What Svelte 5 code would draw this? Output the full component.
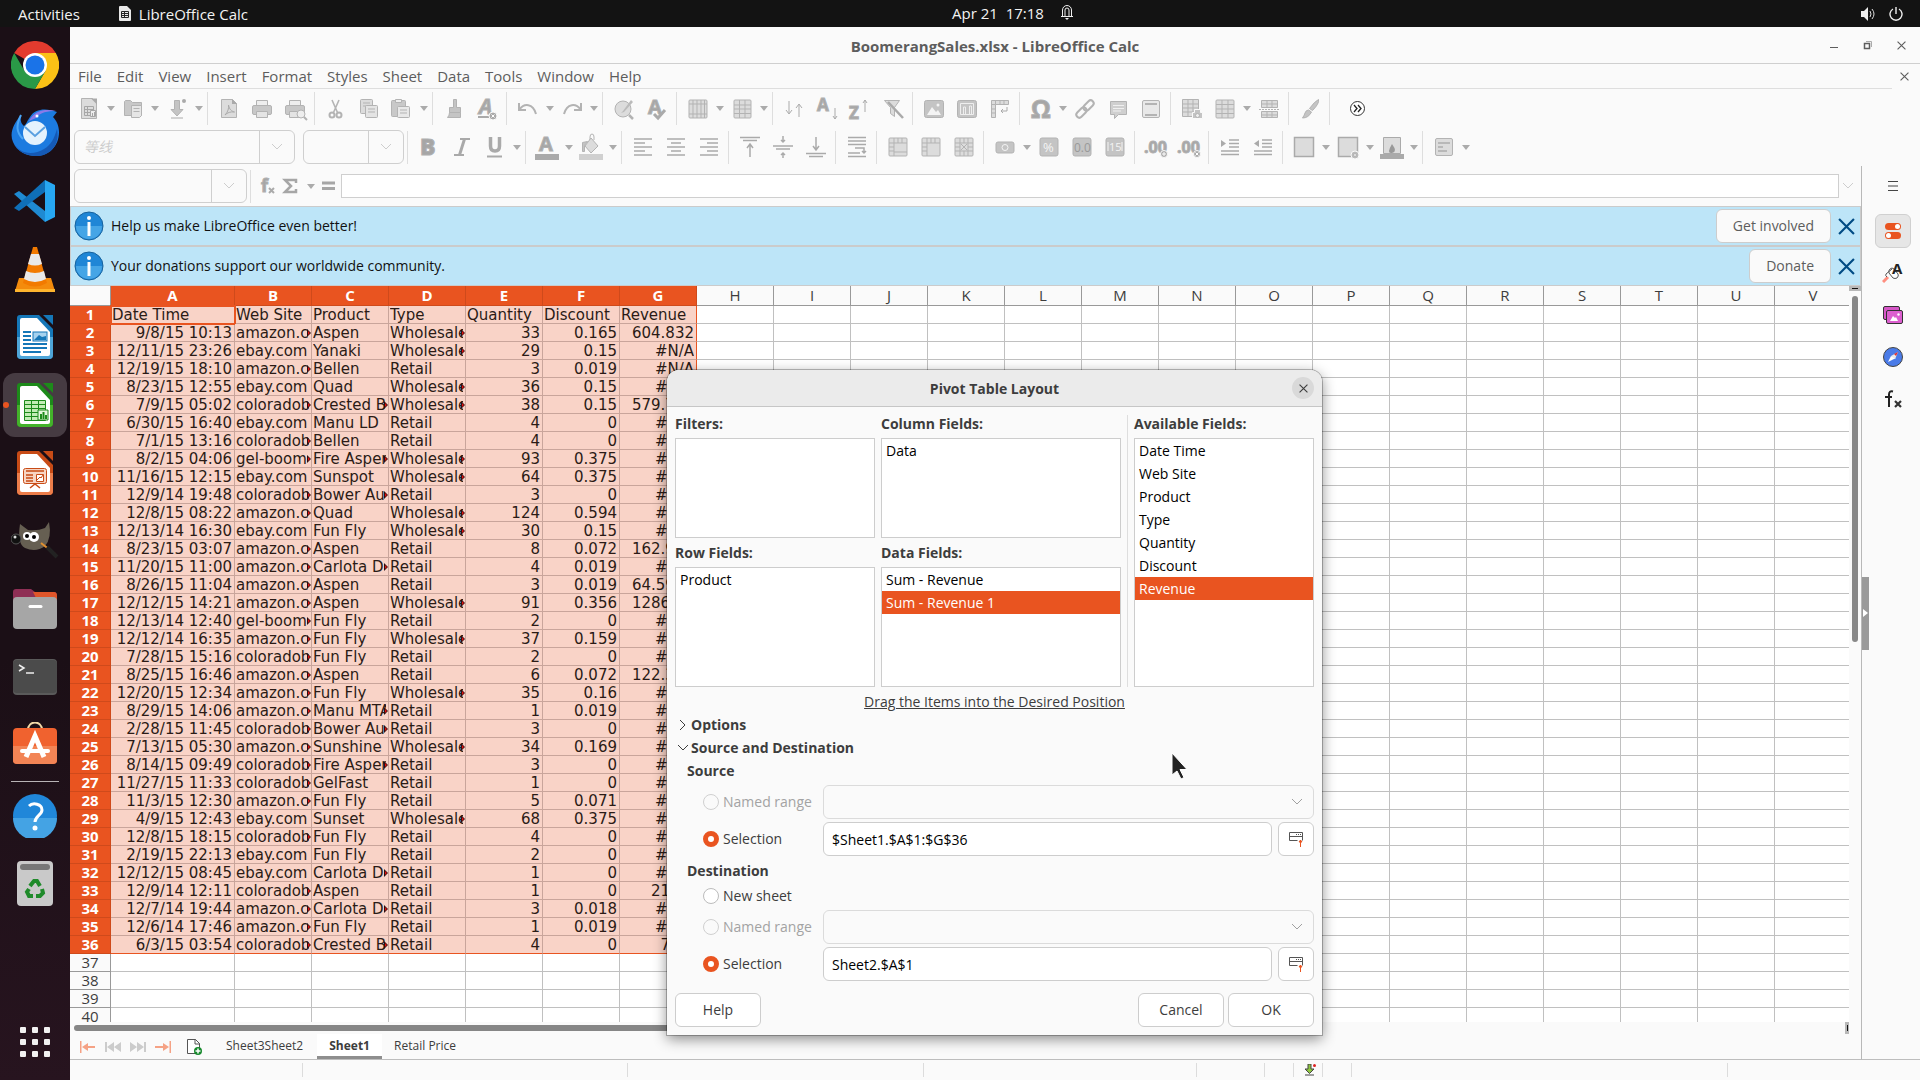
<script>
  const menus = ["File", "Edit", "View", "Insert", "Format", "Styles", "Sheet", "Data", "Tools", "Window", "Help"];

  // toolbar drawings, all on a 24x24 board; grey fill and stroke come from the parent svg
  const sheetGrid = '<rect x="4" y="3" width="17" height="18" rx="1"/><path fill="none" d="M4 8h17M4 12h17M4 16.500h17M9.500 3v18M15 3v18"/>';
  const icons = {
    newdoc: '<path d="M4.500 1.500h11l4 4v16h-15z"/><path fill="#aaa" stroke="none" d="M14 1.500h6v6z"/><path fill="none" stroke="#a6a6a6" d="M7.500 9.500h9v9h-9zM7.500 12.500h9M7.500 15.500h9M10.500 9.500v9"/><path fill="#eee" stroke="#a6a6a6" d="M13.500 13.500h5v6h-5zM15.500 19v-3M17.500 19v-4"/>',
    open: '<path fill="#c8c8c8" d="M3.500 18.500v-14l1-1h5l2 2h9v13z"/><path fill="#e6e6e6" d="M10.500 8.500h10v10l-2 2h-8zM12.500 11.500h6M12.500 14.500h6"/>',
    save: '<path fill="#c4c4c4" d="M9.500 3.500h5v9h3.500l-6 6.500-6-6.500h3.500z"/><circle cx="19" cy="4" r="2" fill="#aaa" stroke="none"/><path stroke="#aaa" d="M6 21h12"/>',
    pdf: '<path d="M4.500 2.500h11l4 4v14h-15z"/><path fill="#aaa" stroke="none" d="M15 2v5h5z"/><path fill="none" stroke="#aaa" d="M8 18c3-3 4-7 3.500-10c1 5 3 6 6 7c-4-.5-7 .5-9.500 3"/>',
    print: '<path fill="#eee" d="M6.500 3.500h11v5h-11z"/><rect x="2.500" y="8.500" width="19" height="9" rx="1.500" fill="#c8c8c8"/><path fill="#e4e4e4" d="M6.500 14.500h11v6h-11z"/>',
    preview: '<path fill="#eee" d="M6.500 3.500h11v5h-11z"/><rect x="2.500" y="8.500" width="19" height="9" rx="1.500" fill="#c8c8c8"/><path fill="#e4e4e4" d="M6.500 14.500h11v6h-11z"/><circle cx="18" cy="17" r="4" fill="#eee"/><path stroke-width="2" d="m21 20 3 3"/>',
    cut: '<path fill="none" stroke="#b4b4b4" stroke-width="1.600" d="M8 3l5.500 12.500M15 3L9.500 15.500"/><circle cx="8" cy="18" r="2.500" fill="none" stroke-width="2"/><circle cx="15" cy="18" r="2.500" fill="none" stroke-width="2"/>',
    copy: '<rect x="3.500" y="2.500" width="12" height="14" rx="1"/><path fill="none" d="M6 6h7M6 9h5"/><rect x="8.500" y="8.500" width="12" height="12" rx="1" fill="#e4e4e4"/><path fill="none" d="M11 12h7M11 15h7"/>',
    paste: '<rect x="1.500" y="3.500" width="14" height="16" rx="1" fill="#c8c8c8"/><path fill="#eee" d="M5.500 2.500h6v3h-6z"/><rect x="7.500" y="9.500" width="12" height="11" rx="1" fill="#e8e8e8"/><path fill="none" d="M10 13h7M10 16h7"/>',
    brush: '<path fill="#c4c4c4" d="M11.500 2.500h3v8h4v5h-11v-5h4z"/><path fill="#c4c4c4" d="M7.500 15.500h11v5h-13q2-2 2-5z"/>',
    clear: '<text x="4" y="17" font-size="21" font-weight="700" font-style="italic">A</text><path stroke="#aaa" stroke-width="2" d="M3 20h11"/><circle cx="18" cy="19" r="4" fill="#aaa" stroke="#fafafa"/><path stroke="#fff" d="m16.500 17.500 3 3m0-3-3 3"/>',
    undo: '<path fill="none" stroke-width="2" d="M3 6v7h7M3.500 12.500C8 6 17 6 20 17"/>',
    redo: '<path fill="none" stroke-width="2" d="M21 6v7h-7M20.500 12.500C16 6 7 6 4 17"/>',
    find: '<circle cx="11" cy="12" r="8"/><path fill="#bbb" stroke="none" d="m11 14 8-11 2 2-9 10-3 1z"/><path stroke-width="2.500" d="m17 18 4 4"/>',
    spell: '<text x="3" y="17" font-size="20" font-weight="700">A</text><path fill="none" stroke="#aaa" stroke-width="3" d="m9 17 4 4 7-8"/>',
    rowIcon: '<rect x="3" y="3" width="18" height="18" rx="1"/><path fill="none" d="M3 7h18M3 17h18M7 3v18M11 3v18M15 3v18M18.500 3v18"/>',
    colIcon: sheetGrid,
    sort: '<path fill="none" stroke="#aaa" d="M7 4v12M4 13l3 4 3-4M17 20V8M14 11l3-4 3 4"/>',
    sortaz: '<text x="2" y="14" font-size="17" font-weight="700">A</text><path fill="none" stroke="#aaa" d="M20 11v11M18 19l2 3 2-3"/>',
    sortza: '<text x="1" y="22" font-size="17" font-weight="700">Z</text><path fill="none" stroke="#aaa" d="M17 15V3M15 6l2-3 2 3"/>',
    filter: '<path d="M3.500 3.500h15l-5 7v9l-4-3v-6z"/><path stroke="#aaa" stroke-width="2.500" d="m7 5 15 16"/>',
    image: '<rect x="2.500" y="3.500" width="19" height="17" rx="2" fill="#c4c4c4"/><path fill="#f4f4f4" stroke="none" d="m5 18 5-8 4 5 2-2 3 5z"/><circle cx="16" cy="8" r="1.500" fill="#f4f4f4" stroke="none"/>',
    chart: '<rect x="2.500" y="3.500" width="19" height="17" rx="2" fill="#c4c4c4"/><path fill="none" stroke="#eee" d="M5.500 6.500h13v11h-13zM8.500 17v-7h2v7M14.500 17V9h2v8"/>',
    pivot: '<path d="M3.500 3.500h17v4h-13v13h-4zM7.500 3.500v4h-4M12 3.500v4M16 3.500v4M3.500 12h4M3.500 16h4"/><path fill="none" stroke="#aaa" d="M19 10v4h-6m2-2-2 2 2 2"/>',
    omega: '<text x="2" y="21" font-size="25" font-weight="700">Ω</text>',
    link: '<g transform="rotate(-45 12 12)" fill="none" stroke-width="2"><rect x="1" y="9" width="12" height="6" rx="3"/><rect x="11" y="9" width="12" height="6" rx="3"/></g>',
    comment: '<path fill="#cfcfcf" d="M4.500 4.500h16v13h-8l-4 4v-4h-4z"/><path stroke="#f0f0f0" d="M7 8.500h11M7 11.500h11M7 14h8"/>',
    header: '<rect x="3.500" y="3.500" width="17" height="17" rx="1.500" fill="#e8e8e8"/><path stroke-width="2" d="M6 7h12M6 18h12"/>',
    printarea: '<path d="M2.500 2.500h16v17h-16zM2.500 7h16M2.500 11h16M2.500 15h16M8 2.500v17M13 2.500v17"/><path fill="#c4c4c4" stroke="#fafafa" d="M12.500 15.500h2v-3h6v3h2v6h-10z"/><circle cx="17.500" cy="18.500" r="2" fill="#eee"/>',
    freeze: '<rect x="3" y="3" width="18" height="18" rx="1"/><path fill="none" d="M3 7.500h18M3 12h18M3 16.500h18M9 3v18M15 3v18"/>',
    split: '<path d="M4.500 3.500h16v7h-16zM4.500 7h16M10 3.500v7M15 3.500v7M4.500 14.500h16v6h-16zM4.500 18h16M10 14.500v6M15 14.500v6"/><path stroke-dasharray="2 1" d="M2 12.500h21"/>',
    draw: '<path fill="#c4c4c4" d="M20.500 2.500q1 4-6 11l-3-2q5-7 9-9zM10.500 13l3 2q-3 6-9 6q2-3 2.500-5 1-3 3.500-3z"/>',
    bold: '<text x="3" y="20" font-size="23" font-weight="800">B</text>',
    italic: '<path fill="none" stroke="#a9a9a9" stroke-width="3" d="M14.500 4 9.500 20"/><path stroke="#a9a9a9" stroke-width="2" d="M10 4h10M4 20h10"/>',
    underline: '<path fill="none" stroke="#aaa" stroke-width="3.500" d="M7.500 2v9q0 5 4.500 5t4.500-5V2"/><path stroke="#aaa" stroke-width="2" d="M4 21.500h15"/>',
    fontcolor: '<text x="4" y="16" font-size="20" font-weight="700">A</text><path fill="#aaa" stroke="none" d="M0 19h24v6H0z"/>',
    bucket: '<path fill="none" d="M11 10V2q0-3 2-3t2 3v3"/><path d="m12 3 7 8-7 7-6-7z"/><path fill="#c4c4c4" d="M3.500 16.500v-9l5-1-3 4v6z"/><path fill="#d0d0d0" stroke="none" d="M0 19h24v6H0z"/>',
    left: '<path stroke="#aaa" stroke-width="1.500" d="M3 4h18M3 8h11M3 12h18M3 16h11M3 20h18"/>',
    center: '<path stroke="#aaa" stroke-width="1.500" d="M3 4h18M7 8h10M3 12h18M7 16h10M3 20h18"/>',
    right: '<path stroke="#aaa" stroke-width="1.500" d="M3 4h18M10 8h11M3 12h18M10 16h11M3 20h18"/>',
    top: '<path fill="none" stroke="#aaa" stroke-width="1.500" d="M2 2.500h20M5 5.500h14M12 22V10M9 13l3-4 3 4"/>',
    middle: '<path fill="none" stroke="#aaa" stroke-width="1.500" d="M2 11h20M5 14h14M12 1v6M10 5l2 2 2-2M12 23v-5M10 20l2-2 2 2"/>',
    bottom: '<path fill="none" stroke="#aaa" stroke-width="1.500" d="M2 18.500h20M5 21.500h14M12 2v12M9 11l3 4 3-4"/>',
    wrap: '<path fill="none" stroke="#aaa" stroke-width="1.500" d="M3 2.500h18M3 6h18M3 9.500h18M3 18h12M3 21.500h18M10 13h9v5m-2-2 2 2 2-2"/>',
    merge: '<rect x="3" y="3" width="18" height="18" rx="1"/><path fill="none" d="M8 3v18M3 8h18M3 12h5M3 16h5M12 3v5M16 3v5M8 17h13"/>',
    mergecell: '<rect x="3" y="3" width="18" height="18" rx="1"/><path fill="none" d="M8 3v18M3 8h18M3 12h5M3 16h5M12 3v5M16 3v5"/>',
    unmerge: '<rect x="3" y="3" width="18" height="18" rx="1"/><path fill="none" d="M8 3v18M16 3v18M3 8h18M3 16h18M12 3v5M12 16v5M3 12h5M16 12h5M9 9l6 6M15 9l-6 6"/>',
    currency: '<rect x="3" y="7" width="18" height="11" rx="2" fill="#c4c4c4"/><circle cx="12" cy="12.500" r="3" fill="none" stroke="#f4f4f4"/>',
    percent: '<rect x="3" y="3" width="18" height="18" rx="2" fill="#c4c4c4"/><text x="6" y="17" font-size="13" fill="#f4f4f4">%</text>',
    number: '<rect x="3" y="3" width="18" height="18" rx="2" fill="#c4c4c4"/><text x="4" y="17" font-size="12" fill="#999">0.0</text>',
    date: '<rect x="3" y="3" width="18" height="18" rx="2" fill="#c4c4c4"/><text x="6" y="16" font-size="11" fill="#f4f4f4">15</text><path stroke="#f4f4f4" d="M5 7v9M19 7v9"/>',
    adddec: '<text x="0" y="18" font-size="16" font-weight="700">.00</text><circle cx="20" cy="19" r="3.500" fill="#aaa" stroke="#fafafa"/><path stroke="#fff" d="M18 19h4M20 17v4"/>',
    deldec: '<text x="0" y="18" font-size="16" font-weight="700">.00</text><circle cx="20" cy="19" r="3.500" fill="#aaa" stroke="#fafafa"/><path stroke="#fff" d="m18.500 17.500 3 3m0-3-3 3"/>',
    indent: '<path stroke="#aaa" stroke-width="1.500" d="M11 5h10M11 8.500h10M11 12h10M3 16h18M3 19.500h18"/><path fill="#aaa" stroke="none" d="m3 5 5 3.500L3 12z"/>',
    outdent: '<path stroke="#aaa" stroke-width="1.500" d="M11 5h10M11 8.500h10M11 12h10M3 16h18M3 19.500h18"/><path fill="#aaa" stroke="none" d="M8 5 3 8.500 8 12z"/>',
    border: '<path stroke="#aaa" stroke-width="1.500" d="M2.500 2.500h19v19h-19z"/>',
    bstyle: '<path stroke="#aaa" stroke-width="1.500" d="M2.500 2.500h19v19h-19z"/><circle cx="19" cy="20" r="4" fill="#bbb" stroke="#fafafa"/><circle cx="19" cy="20" r="1.500" fill="#eee"/>',
    bcolor: '<path stroke="#aaa" d="M3.500 2.500h17v16h-17z"/><path fill="#999" stroke="none" d="M12 9q6 8 0 9t0-9"/><path fill="#aaa" stroke="none" d="M0 19h24v5H0z"/>',
    condition: '<rect x="3.500" y="3.500" width="17" height="17" rx="1.500"/><path stroke="#b8b8b8" stroke-width="2" d="M6 8h12M6 12h5M6 16h9"/>',
  };

  const bar1 = [
    ["newdoc", "open", "save"], ["pdf", "print", "preview"], ["cut", "copy", "paste"], ["brush", "clear"],
    ["undo", "redo"], ["find", "spell"], ["rowIcon", "colIcon"], ["sort", "sortaz", "sortza", "filter"],
    ["image", "chart", "pivot"], ["omega", "link", "comment", "header"], ["printarea", "freeze", "split"], ["draw"],
  ];
  const bar2 = [
    ["bold", "italic", "underline"], ["fontcolor", "bucket"], ["left", "center", "right"], ["top", "middle", "bottom"],
    ["wrap"], ["merge", "mergecell", "unmerge"], ["currency", "percent", "number", "date"], ["adddec", "deldec"],
    ["indent", "outdent"], ["border", "bstyle", "bcolor"], ["condition"],
  ];
  const withCaret = new Set([
    "newdoc", "open", "save", "paste", "undo", "redo", "rowIcon", "colIcon", "omega", "freeze",
    "underline", "fontcolor", "bucket", "currency", "border", "bstyle", "bcolor", "condition",
  ]);

  const letters = "ABCDEFGHIJKLMNOPQRSTUV".split("");
  const blankRows = [37, 38, 39, 40];
  const names = { a: "amazon.co", c: "coloradob", e: "ebay.com", g: "gel-boom", W: "Wholesale", R: "Retail" };
  // values wider than their column get the small overflow arrow
  const wide = ["amazon.co", "coloradob", "gel-boom", "Crested B", "Fire Aspen", "Bower Au", "Carlota D", "Manu MTA", "Wholesale"];
  const rows = `Date Time|Web Site|Product|Type|Quantity|Discount|Revenue
9/8/15 10:13|a|Aspen|W|33|0.165|604.832
12/11/15 23:26|e|Yanaki|W|29|0.15|#N/A
12/19/15 18:10|a|Bellen|R|3|0.019|#N/A
8/23/15 12:55|e|Quad|W|36|0.15|#N/A
7/9/15 05:02|c|Crested B|W|38|0.15|579.747
6/30/15 16:40|e|Manu LD|R|4|0|#N/A
7/1/15 13:16|c|Bellen|R|4|0|#N/A
8/2/15 04:06|g|Fire Aspen|W|93|0.375|#N/A
11/16/15 12:15|e|Sunspot|W|64|0.375|#N/A
12/9/14 19:48|c|Bower Au|R|3|0|#N/A
12/8/15 08:22|a|Quad|W|124|0.594|#N/A
12/13/14 16:30|e|Fun Fly|W|30|0.15|#N/A
8/23/15 03:07|a|Aspen|R|8|0.072|162.934
11/20/15 11:00|a|Carlota D|R|4|0.019|#N/A
8/26/15 11:04|a|Aspen|R|3|0.019|64.5953
12/12/15 14:21|a|Aspen|W|91|0.356|1286.35
12/13/14 12:40|g|Fun Fly|R|2|0|#N/A
12/12/14 16:35|a|Fun Fly|W|37|0.159|#N/A
7/28/15 15:16|c|Fun Fly|R|2|0|#N/A
8/25/15 16:46|a|Aspen|R|6|0.072|122.382
12/20/15 12:34|a|Fun Fly|W|35|0.16|#N/A
8/29/15 14:06|a|Manu MTA|R|1|0.019|#N/A
2/28/15 11:45|c|Bower Au|R|3|0|#N/A
7/13/15 05:30|a|Sunshine|W|34|0.169|#N/A
8/14/15 09:49|c|Fire Aspen|R|3|0|#N/A
11/27/15 11:33|c|GelFast|R|1|0|#N/A
11/3/15 12:30|a|Fun Fly|R|5|0.071|#N/A
4/9/15 12:43|e|Sunset|W|68|0.375|#N/A
12/8/15 18:15|c|Fun Fly|R|4|0|#N/A
2/19/15 22:13|e|Fun Fly|R|2|0|#N/A
12/12/15 08:45|e|Carlota D|R|1|0|#N/A
12/9/14 12:11|c|Aspen|R|1|0|21.95
12/7/14 19:44|a|Carlota D|R|3|0.018|#N/A
12/6/14 17:46|a|Fun Fly|R|1|0.019|#N/A
6/3/15 03:54|c|Crested B|R|4|0|7.95`.split("\n").map((line) => line.split("|"));
  const extra = letters.slice(7);

  const available = ["Date Time", "Web Site", "Product", "Type", "Quantity", "Discount", "Revenue"];
  let picked = $state("Revenue");
  let pickedData = $state("Sum - Revenue 1");
  let source = $state("selection");
  let destination = $state("selection");
  let sourceRange = $state("$Sheet1.$A$1:$G$36");
  let destinationCell = $state("Sheet2.$A$1");
</script>

{#snippet toolbar(groups)}
  {#each groups as group, i}
    {#if i > 0}<span class="sep"></span>{/if}
    {#each group as name}
      <button class="tool" aria-label={name}>
        <svg width="24" height="24" viewBox="0 0 24 24">{@html icons[name]}</svg>
      </button>
      {#if withCaret.has(name)}
        <button class="caret" aria-label="{name} options"><i></i></button>
      {/if}
    {/each}
  {/each}
{/snippet}

{#snippet chevron()}
  <svg width="12" height="8" viewBox="0 0 12 8"><path d="m1 1 5 5 5-5" fill="none" stroke="currentColor" /></svg>
{/snippet}

{#snippet cross(size)}
  <svg width={size} height={size} viewBox="0 0 16 16"><path d="m1 1 14 14M15 1 1 15" stroke="currentColor" stroke-width="2" /></svg>
{/snippet}

{#snippet infobar(text, action)}
  <div class="infobar">
    <svg width="30" height="30" viewBox="0 0 30 30">
      <circle cx="15" cy="15" r="14" fill="#1f86d6" stroke="#17629d" />
      <path d="M2 15h26a13 13 0 0 1-26 0z" fill="#45a5e6" />
      <path d="M15 11v14" stroke="#fff" stroke-width="3" /><circle cx="15" cy="7" r="2" fill="#fff" />
    </svg>
    <span>{text}</span>
    <button class="btn">{action}</button>
    <button class="dismiss" aria-label="Close">{@render cross(17)}</button>
  </div>
{/snippet}

{#snippet shrink()}
  <button class="btn pick" aria-label="Shrink">
    <svg width="16" height="16" viewBox="0 0 16 16">
      <path d="M1.500 9.500v-8h13v8M1.500 5.500h13M1.500 9.500h8" fill="none" stroke="#555" />
      <path d="M8 3.500h1M10 3.500h1M12 3.500h1" stroke="#555" />
      <path d="M12.500 16V9M11 11l1.500-2 1.500 2z" fill="#e95420" stroke="#e95420" />
    </svg>
  </button>
{/snippet}

<div class="desktop">
  <header class="topbar">
    <span class="activities">Activities</span>
    <svg width="12" height="15" viewBox="0 0 12 15">
      <path d="M0 1q0-1 1-1h7l4 4v10q0 1-1 1H1q-1 0-1-1z" fill="#e8e8e8" />
      <path d="M2.500 5.500h7v6h-7zM2.500 7.500h7M2.500 9.500h7M5.500 5.500v6" fill="none" stroke="#222" />
    </svg>
    <span>LibreOffice Calc</span>
    <div class="clock">
      <span>Apr 21&nbsp; 17:18</span>
      <svg width="14" height="16" viewBox="0 0 14 16">
        <path d="M1 12.500h12M2.500 12V6a4.500 4.500 0 0 1 9 0v6M5 12V6a2 2 0 0 1 4 0v6" fill="none" stroke="#eee" />
        <path d="M5 14h4l-2 2z" fill="#eee" />
      </svg>
    </div>
    <div class="tray">
      <svg width="15" height="14" viewBox="0 0 15 14">
        <path d="M0 4h3l4-4v14l-4-4H0z" fill="#eee" /><path d="M9 4q2 3 0 6M11 2q4 5 0 10" fill="none" stroke="#ddd" />
      </svg>
      <svg width="14" height="14" viewBox="0 0 14 14">
        <path d="M4 2a6 6 0 1 0 6 0M7 0v7" fill="none" stroke="#eee" stroke-width="1.400" />
      </svg>
    </div>
  </header>

  <div class="screen">
    <nav class="dock">
      <button class="app" aria-label="Chrome">
        <svg width="48" height="48" viewBox="0 0 48 48">
          <path d="M24 24 3.200 12A24 24 0 0 1 44.800 12z" fill="#e33b2e" />
          <path d="M24 12h20.800A24 24 0 0 1 24 48l10.400-18z" fill="#fbc116" />
          <path d="M24 48A24 24 0 0 1 3.200 12l10.400 18L24 36l10.400-6z" fill="#2a9947" />
          <circle cx="24" cy="24" r="12" fill="#fff" /><circle cx="24" cy="24" r="9.500" fill="#1a73e8" />
        </svg>
      </button>
      <button class="app" aria-label="Thunderbird">
        <svg width="48" height="48" viewBox="0 0 48 48">
          <path d="M10 6c-7 8-12 18-8 27 4 10 14 14 23 14 13 0 23-10 23-24 0-7-3-12-6-15l4-5c-10-4-22-4-27 5-3 4-3 6-6 9-3-2-4-6-3-11z" fill="#1c7be0" />
          <path d="M3 34c6 12 20 12 30 6 7-4 10-10 13-20 3 15-6 27-21 27C15 47 6 42 3 34z" fill="#1559b5" />
          <path d="M10 6c-5 10-5 17 2 24" fill="none" stroke="#4ca6f5" stroke-width="2" />
          <path d="M18 12C24 0 36 0 45 2c-8 0-16 1-20 7z" fill="#8a7ae8" />
          <circle cx="24" cy="24" r="12" fill="#e4f2fd" /><path d="M14 18l10 9 10-9" fill="none" stroke="#5aa0e0" stroke-width="2" />
          <circle cx="26" cy="7" r="1.500" fill="#fff" />
        </svg>
      </button>
      <button class="app" aria-label="Visual Studio Code">
        <svg width="44" height="44" viewBox="0 0 44 44">
          <path d="m1 15 5-3 26 20v11z" fill="#1f8ad2" /><path d="M1 29 32 1v12L6 32z" fill="#0f6fb8" />
          <path d="M32 1l10 5v32l-10 5z" fill="#27a7f2" />
        </svg>
      </button>
      <button class="app" aria-label="VLC">
        <svg width="42" height="48" viewBox="0 0 42 48">
          <path d="M5 33h32l4 13q0 1-1 1H2q-1 0-1-1z" fill="#f48b0c" /><path d="M1 44h40v3H1z" fill="#ffb52e" />
          <path d="M19 2h4l10 36q-12 7-24 0z" fill="#f27a00" />
          <path d="m17 9h8l3 10q-7 3-14 0zM12 26q9 4 18 0l2 8q-11 6-22 0z" fill="#e9e9e9" />
        </svg>
      </button>
      {#each [["Writer", "#1577b8", "#4ea5d8"], ["Calc", "#1d8a1a", "#43b32a"], ["Impress", "#c84b16", "#ec7d4a"]] as [name, dark, light]}
        <button class="app" class:active={name === "Calc"} aria-label={name}>
          <svg width="36" height="44" viewBox="0 0 36 44">
            <path d="M3 0h19l14 14v26q0 4-4 4H4q-4 0-4-4V3q0-3 3-3z" fill={dark} />
            <path d="M0 22h36v18q0 4-4 4H4q-4 0-4-4z" fill={light} />
            <path d="M26 0h10v10z" fill={dark} />
            <path d="M5 3h15l13 14v22q0 2-2 2H5q-2 0-2-2V5q0-2 2-2z" fill="#fff" />
            {#if name === "Writer"}
              <path d="M6 17h8M6 21h8M6 25h8M6 29h24M6 33h24M6 37h18" stroke={dark} stroke-width="2" />
              <rect x="16" y="17" width="14" height="9" fill="#a5d2ef" stroke={dark} /><path d="m17 25 5-5 3 2 4-1v4z" fill={dark} />
            {:else if name === "Calc"}
              <path d="M7.500 17.500h21v20h-21zM7.500 21.500h21M7.500 25.500h21M7.500 29.500h21M7.500 33.500h21M14.500 17.500v20M21.500 17.500v20" fill="#c3ecb5" stroke={dark} />
              <path d="M21 27h10v10H21z" fill="#e3f7db" stroke={dark} /><path d="M24 36v-5M26.500 36v-7M29 36v-4" stroke={dark} stroke-width="2" />
            {:else}
              <rect x="6.500" y="17.500" width="23" height="15" rx="2" fill="#f7d5c3" stroke={dark} />
              <path d="M9 20h18M9 24h7M9 27h7M9 30h7M13 37l5-4 5 4" fill="none" stroke={dark} stroke-width="1.500" />
              <path d="M19.500 23.500h7v7h-7zM20 29l3-3 1 1 2-3" fill="#fff" stroke={dark} />
            {/if}
          </svg>
        </button>
      {/each}
      <button class="app" aria-label="GIMP">
        <svg width="48" height="38" viewBox="0 0 48 38">
          <path d="M9 2l8 6q10 1 17-2l4-6q3 16-4 24-9 7-20 2Q6 22 9 2z" fill="#665f52" />
          <path d="M30 21l14 11" stroke="#e09030" stroke-width="2" /><path d="m36 25 10 10" stroke="#222" stroke-width="4" />
          <circle cx="5" cy="17" r="5" fill="#111" stroke="#555" /><circle cx="16" cy="14" r="4" fill="#fff" /><circle cx="23" cy="15" r="5" fill="#fff" />
          <circle cx="16" cy="14" r="2" /><circle cx="23" cy="15" r="2" /><circle cx="4" cy="15" r="1.500" fill="#ddd" />
        </svg>
      </button>
      <button class="app" aria-label="Files">
        <svg width="44" height="40" viewBox="0 0 44 40">
          <path d="M0 3q0-3 3-3h15l4 3h19q3 0 3 4v10H0z" fill="#8f2f55" /><path d="M20 3h21q3 0 3 4v4H24z" fill="#e0562a" />
          <rect y="8" width="44" height="32" rx="4" fill="#a6a6a6" /><path d="M17 17.500h11" stroke="#fff" stroke-width="3" stroke-linecap="round" />
        </svg>
      </button>
      <button class="app" aria-label="Terminal">
        <svg width="44" height="36" viewBox="0 0 44 36">
          <rect width="44" height="36" rx="4" fill="#5a5a5a" /><rect y="1" width="44" height="33" rx="4" fill="#4b4b4b" />
          <path d="m6 6 5 3-5 3M13 14h8" fill="none" stroke="#eee" stroke-width="1.500" />
        </svg>
      </button>
      <button class="app" aria-label="Ubuntu Software">
        <svg width="44" height="46" viewBox="0 0 44 46">
          <path d="M15 8c0-10 14-10 14 0" fill="none" stroke="#f2d9a8" stroke-width="2" />
          <rect y="6" width="44" height="36" rx="4" fill="#f0622f" /><path d="M0 24h44v14q0 4-4 4H4q-4 0-4-4z" fill="#f28455" />
          <path d="M13 35 22 14l9 21" fill="none" stroke="#fff" stroke-width="5" /><path d="M9 29h26" stroke="#fff" stroke-width="4" stroke-linecap="round" />
        </svg>
      </button>
      <hr />
      <button class="app" aria-label="Help">
        <svg width="44" height="44" viewBox="0 0 44 44">
          <circle cx="22" cy="22" r="22" fill="#2087d9" /><path d="M0 24h44a22 22 0 0 1-44 0z" fill="#44a3e4" />
          <path d="M16 12c4-4 13-2 13 4 0 5-7 6-7 12" fill="none" stroke="#fff" stroke-width="3" /><circle cx="22" cy="34" r="2.500" fill="#fff" />
        </svg>
      </button>
      <button class="app" aria-label="Trash">
        <svg width="36" height="46" viewBox="0 0 36 46">
          <rect width="36" height="45" rx="4" fill="#c9c9c9" /><rect x="3" y="3" width="30" height="6" rx="3" fill="#777" />
          <g fill="none" stroke="#1f8a2a" stroke-width="4"><path d="m13 25 4-5h3l3 5" /><path d="m25 28 1 4-3 3h-4" /><path d="M16 35h-4l-2-4 2-3" /></g>
        </svg>
      </button>
      <button class="app grid" aria-label="Show Applications">
        <svg width="30" height="30" viewBox="0 0 30 30">
          {#each [0, 12, 24] as y}{#each [0, 12, 24] as x}<rect {x} {y} width="6" height="6" rx="1" fill="#f2f2f2" />{/each}{/each}
        </svg>
      </button>
    </nav>

    <main class="window">
      <div class="titlebar">
        <h1>BoomerangSales.xlsx - LibreOffice Calc</h1>
        <div class="controls">
          <button aria-label="Minimize"><svg width="10" height="10"><path d="M1 7.500h8" stroke="currentColor" /></svg></button>
          <button aria-label="Restore"><svg width="10" height="10"><path d="M1.500 3.500h5v5h-5z" fill="none" stroke="currentColor" stroke-width="1.500" /><path d="M3 1.500h5.500V7" fill="none" stroke="#aaa" /></svg></button>
          <button aria-label="Close">{@render cross(9)}</button>
        </div>
      </div>
      <div class="menubar">
        <div class="menus">
          {#each menus as menu}<button>{menu}</button>{/each}
        </div>
        <button aria-label="Close document">{@render cross(9)}</button>
      </div>
      <div class="bar first">
        {@render toolbar(bar1)}
        <span class="sep"></span>
        <button class="more" aria-label="More">
          <svg width="15" height="15" viewBox="0 0 15 15"><circle cx="7.500" cy="7.500" r="7" fill="#fff" stroke="#333" /><path d="m4 4 3 3.500L4 11M8 4l3 3.500L8 11" fill="none" stroke="#222" stroke-width="1.300" /></svg>
        </button>
      </div>
      <div class="bar">
        <div class="combo font"><input aria-label="Font name" value="等线" disabled /><button aria-label="Fonts">{@render chevron()}</button></div>
        <div class="combo size"><input aria-label="Font size" disabled /><button aria-label="Sizes">{@render chevron()}</button></div>
        <span class="sep"></span>
        {@render toolbar(bar2)}
      </div>

      <div class="work">
        <div class="document">
          <div class="formula">
            <div class="combo name"><input aria-label="Name box" disabled /><button aria-label="Names">{@render chevron()}</button></div>
            <span class="sep"></span>
            <button class="fx" aria-label="Function wizard"><svg width="24" height="24"><text x="6" y="18" font-size="18" font-weight="700">f</text><path d="m14 14 5 5m0-5-5 5" stroke="#aaa" stroke-width="2" /></svg></button>
            <button class="fx" aria-label="Sum"><svg width="24" height="24"><path d="M16 9V6H5l6 6-6 6h11v-3" fill="none" stroke="#a6a6a6" stroke-width="2.500" /></svg></button>
            <button class="caret" aria-label="Sum options"><i></i></button>
            <button class="fx" aria-label="Formula"><svg width="24" height="24"><path d="M6 9h13M6 14.500h13" stroke="#a6a6a6" stroke-width="3" /></svg></button>
            <input class="line" aria-label="Formula input" />
            <button class="expand" aria-label="Expand formula bar">{@render chevron()}</button>
          </div>
          {@render infobar("Help us make LibreOffice even better!", "Get involved")}
          {@render infobar("Your donations support our worldwide community.", "Donate")}

          <div class="sheet">
            <div class="cells">
              <table>
                <colgroup>
                  <col class="c-head" /><col class="c-date" />
                  {#each letters.slice(1) as _}<col class="c-std" />{/each}
                </colgroup>
                <thead>
                  <tr><th></th>{#each letters as letter, i}<th class:sel={i < 7}>{letter}</th>{/each}</tr>
                </thead>
                <tbody>
                  {#each rows as row, r}
                    <tr>
                      <th class="sel">{r + 1}</th>
                      {#each row as raw, c}
                        {@const value = names[raw] ?? raw}
                        <td class="sel" class:num={r > 0 && (c === 0 || c > 3)} class:cut={wide.includes(value)} class:edge={c === 6} class:last={r === 35} class:cursor={r + c === 0}><span>{value}</span></td>
                      {/each}
                      {#each extra as _}<td></td>{/each}
                    </tr>
                  {/each}
                  {#each blankRows as n}
                    <tr><th>{n}</th>{#each letters as _}<td></td>{/each}</tr>
                  {/each}
                </tbody>
              </table>
            </div>
            <div class="vscroll"><b></b><i></i></div>
          </div>
          <div class="hscroll"><i></i><b></b></div>
          <div class="tabs">
            <svg width="16" height="14"><path d="M.5 1v12M15 7H4" stroke="#f5a285" stroke-width="2" /><path d="M8 3v8L2 7z" fill="#f5a285" /></svg>
            <svg width="16" height="14"><path d="M1 2v10" stroke="#ccc" stroke-width="2" /><path d="M9 2v10L2 7zM16 2v10L9 7z" fill="#ccc" /></svg>
            <svg width="16" height="14"><path d="M15 2v10" stroke="#ccc" stroke-width="2" /><path d="M7 2v10l7-5zM0 2v10l7-5z" fill="#ccc" /></svg>
            <svg width="16" height="14"><path d="M15.500 1v12M0 7h11" stroke="#f5a285" stroke-width="2" /><path d="M8 3v8l6-4z" fill="#f5a285" /></svg>
            <button class="add" aria-label="Add sheet">
              <svg width="16" height="17"><path d="M1.500 1.500h8l4 4v10h-12z" fill="#fff" stroke="#555" /><path d="M9 1v5h5" fill="none" stroke="#555" /><circle cx="12" cy="13" r="4" fill="#188a2e" /><path d="M9.500 13h5M12 10.500v5" stroke="#fff" stroke-width="1.500" /></svg>
            </button>
            <button>Sheet3Sheet2</button>
            <button class="on">Sheet1</button>
            <button>Retail Price</button>
          </div>
        </div>

        <aside class="sidebar">
          <button aria-label="Sidebar settings"><svg width="10" height="10"><path d="M0 .5h10M0 5h10M0 9.500h10" stroke="#444" /></svg></button>
          <button class="deck on" aria-label="Properties">
            <svg width="18" height="18"><rect x="1" y="1" width="16" height="7" rx="3.500" fill="#e95420" /><rect x="1" y="10" width="16" height="7" rx="3.500" fill="#e95420" /><circle cx="13.500" cy="4.500" r="2.500" fill="#fff" /><circle cx="4.500" cy="13.500" r="2.500" fill="#fff" /></svg>
          </button>
          <button class="deck" aria-label="Styles">
            <svg width="22" height="22"><path d="m1 20 5-5" stroke="#ff8f80" stroke-width="3" /><path d="m10 7-6 5q-1 2 1 3M8 7q2-2 4 0l4 5q1 2-1 4-2 1-4 0l-4-5q-1-2 1-4z" fill="#fff" stroke="#555" /><text x="10" y="12" font-size="15" font-weight="700" fill="#222">A</text></svg>
          </button>
          <button class="deck" aria-label="Gallery">
            <svg width="22" height="20"><rect x="1.500" y="1.500" width="16" height="13" rx="1.500" fill="#d657c7" stroke="#333" /><rect x="4.500" y="5.500" width="16" height="13" rx="1.500" fill="#dc5fcf" stroke="#333" /><path d="m8 16 3-5 2 2 1-1 2 4z" fill="#fff" /><circle cx="16.500" cy="9.500" r="1.200" fill="#fff" /></svg>
          </button>
          <button class="deck" aria-label="Navigator">
            <svg width="22" height="22"><circle cx="11" cy="11" r="9.500" fill="#4a7be8" stroke="#444" /><path d="m6 16 3-6 5 2z" fill="#fff" /><path d="m16 6-7 4 4 3z" fill="#eaeaea" /><path d="m16 6-4 2 2 2z" fill="#e03030" /></svg>
          </button>
          <button class="deck" aria-label="Functions">
            <svg width="22" height="22"><path d="M11 3.500q-4-1-4 3V19M3 9h7" fill="none" stroke="#222" stroke-width="2" /><path d="m13 13 6 6m0-6-6 6" stroke="#333" stroke-width="2.200" /></svg>
          </button>
          <button class="hide" aria-label="Hide sidebar"><svg width="6" height="8"><path d="m0 0 5 4-5 4z" fill="#fff" /></svg></button>
        </aside>
      </div>

      <footer class="status">
        <span class="s-sheet"></span><span class="s-style"></span><span class="s-lang"></span><span class="s-mode"></span>
        <span class="s-sel"></span><span class="s-small"></span>
        <span class="s-small"><svg width="12" height="12"><path d="M4 0h3v5h3l-4.500 4.500L1 5h3z" fill="#8dc63f" stroke="#444" /><path d="M1 11h9" stroke="#444" /><circle cx="10.500" cy="1.500" r="1.500" fill="#d22" /></svg></span>
        <span class="s-small"></span><span class="s-sum"></span><span class="s-zoom"></span>
      </footer>
    </main>
  </div>

  <section class="dialog" aria-label="Pivot Table Layout">
    <div class="head">
      <h2>Pivot Table Layout</h2>
      <button aria-label="Close">{@render cross(9)}</button>
    </div>
    <div class="body">
      <div class="fields">
        <div class="stack">
          <h3>Filters:</h3>
          <ul class="short"></ul>
          <h3>Row Fields:</h3>
          <ul class="tall"><li><button>Product</button></li></ul>
        </div>
        <div class="stack">
          <h3>Column Fields:</h3>
          <ul class="short"><li><button>Data</button></li></ul>
          <h3>Data Fields:</h3>
          <ul class="tall">
            {#each ["Sum - Revenue", "Sum - Revenue 1"] as field}
              <li><button class:on={pickedData === field} onclick={() => (pickedData = field)}>{field}</button></li>
            {/each}
          </ul>
        </div>
        <div class="stack avail">
          <h3>Available Fields:</h3>
          <ul>
            {#each available as field}
              <li><button class:on={picked === field} onclick={() => (picked = field)}>{field}</button></li>
            {/each}
          </ul>
        </div>
      </div>
      <p class="hint">Drag the Items into the Desired Position</p>
      <button class="expander"><svg width="8" height="12"><path d="m1 1 5 5-5 5" fill="none" stroke="currentColor" /></svg>Options</button>
      <button class="expander">{@render chevron()}Source and Destination</button>
      <h3 class="group">Source</h3>
      <div class="choice">
        <label class="off"><input type="radio" bind:group={source} value="named" disabled />Named range</label>
        <div class="pulldown"><select aria-label="Source named range" disabled></select>{@render chevron()}</div>
      </div>
      <div class="choice">
        <label><input type="radio" bind:group={source} value="selection" />Selection</label>
        <input class="entry" aria-label="Source selection" bind:value={sourceRange} />
        {@render shrink()}
      </div>
      <h3 class="group dest">Destination</h3>
      <div class="choice single">
        <label><input type="radio" bind:group={destination} value="new" />New sheet</label>
      </div>
      <div class="choice">
        <label class="off"><input type="radio" bind:group={destination} value="named" disabled />Named range</label>
        <div class="pulldown"><select aria-label="Destination named range" disabled></select>{@render chevron()}</div>
      </div>
      <div class="choice">
        <label><input type="radio" bind:group={destination} value="selection" />Selection</label>
        <input class="entry" aria-label="Destination selection" bind:value={destinationCell} />
        {@render shrink()}
      </div>
      <div class="actions">
        <button class="btn">Help</button>
        <button class="btn">Cancel</button>
        <button class="btn">OK</button>
      </div>
    </div>
  </section>

  <svg class="pointer" width="18" height="28" viewBox="0 0 18 28">
    <path d="M1 1v22l5-4 4 8 3-1.500-4-8h7z" fill="#222" stroke="#fff" />
  </svg>
</div>

<style>
  :global(body) {
    margin: 0;
  }

  .desktop {
    position: relative;
    display: flex;
    flex-direction: column;
    height: 100vh;
    overflow: hidden;
    font: 14px/18px "Open Sans", "Noto Sans", "Noto Sans CJK SC", sans-serif;
    color: #3d3d3d;
    background: #fafafa;
  }

  button,
  input,
  select {
    box-sizing: border-box;
    margin: 0;
    padding: 0;
    border: 0;
    background: none;
    font: inherit;
    color: inherit;
  }

  button {
    display: flex;
    align-items: center;
    justify-content: center;
    white-space: nowrap;
  }

  svg {
    display: block;
    flex: none;
  }

  h1,
  h2,
  h3,
  p,
  ul {
    margin: 0;
    padding: 0;
    font-size: 14px;
    list-style: none;
  }

  .topbar {
    position: relative;
    display: flex;
    align-items: center;
    flex: none;
    height: 27px;
    padding: 0 17px 0 18px;
    background: #131313;
    color: #f2f2f2;
    font-size: 15px;
  }

  .activities {
    margin-right: 39px;
  }

  .topbar > svg {
    margin-right: 8px;
  }

  .clock {
    position: absolute;
    left: 50%;
    top: 4px;
    display: flex;
    gap: 16px;
    margin-left: -8px;
  }

  .tray {
    display: flex;
    gap: 13px;
    margin-left: auto;
  }

  .screen {
    display: flex;
    flex: 1;
    min-height: 0;
  }

  .dock {
    display: flex;
    flex-direction: column;
    align-items: center;
    flex: none;
    width: 70px;
    padding-top: 6px;
    box-sizing: border-box;
    background: linear-gradient(#1b0f16 60%, #27141f);
  }

  .app {
    flex: none;
    width: 64px;
    height: 64px;
    margin-bottom: 4px;
    border-radius: 12px;
  }

  .app.active {
    position: relative;
    background: #463b42;
  }

  .app.active::before {
    content: "";
    position: absolute;
    left: 0;
    width: 6px;
    height: 6px;
    border-radius: 3px;
    background: #e95420;
  }

  .dock hr {
    width: 48px;
    height: 1px;
    margin: 0 0 2px;
    border: 0;
    background: #b8b4b6;
  }

  .app.grid {
    margin: auto 0 6px;
  }

  .window {
    display: flex;
    flex-direction: column;
    flex: 1;
    min-width: 0;
  }

  .titlebar {
    display: grid;
    grid-template-columns: 1fr auto 1fr;
    align-items: center;
    height: 36px;
    border-bottom: 1px solid #cfcfcf;
    color: #5d5d5d;
  }

  .titlebar h1 {
    grid-column: 2;
    padding-top: 1px;
    font-size: 15px;
  }

  .controls {
    display: flex;
    justify-content: flex-end;
    gap: 24px;
    padding-right: 14px;
  }

  .menubar {
    display: flex;
    height: 25px;
    padding-right: 11px;
    color: #5d5d5d;
    font-size: 15px;
  }

  .menus {
    display: flex;
    flex: 1;
    gap: 15px;
    margin-right: 8px;
    padding-left: 8px;
    border-bottom: 1px solid #dedede;
  }

  .bar {
    display: flex;
    align-items: center;
    height: 38px;
    padding-left: 4px;
  }

  .bar.first {
    height: 39px;
    padding-left: 2px;
  }

  .tool {
    flex: none;
    width: 33px;
    height: 33px;
  }

  .tool svg {
    overflow: visible;
    fill: #dcdcdc;
    stroke: #b3b3b3;
  }

  .tool :global(text),
  .fx text {
    font-family: "Open Sans", sans-serif;
    stroke: none;
  }

  .tool :global(text:not([fill])),
  .fx text {
    fill: #a6a6a6;
    stroke: #b0b0b0;
  }

  .caret {
    flex: none;
    width: 11px;
    height: 33px;
  }

  .caret i {
    border: 4px solid transparent;
    border-top: 5px solid #ababab;
    border-bottom: 0;
  }

  .sep {
    flex: none;
    width: 1px;
    height: 33px;
    margin: 0 4px 0 3px;
    background: #dedede;
  }

  .more {
    margin-left: 16px;
  }

  .combo {
    display: flex;
    box-sizing: border-box;
    flex: none;
    height: 34px;
    border: 1px solid #cfcfcf;
    border-radius: 6px;
    color: #cdcdcd;
  }

  .combo input {
    flex: 1;
    min-width: 0;
    padding-left: 9px;
    font-style: italic;
  }

  .combo button {
    width: 35px;
    border-left: 1px solid #cfcfcf;
  }

  .combo.font {
    width: 221px;
    margin-right: 8px;
  }

  .combo.size {
    width: 101px;
  }

  .combo.name {
    width: 173px;
  }

  .work {
    display: flex;
    flex: 1;
    min-height: 0;
  }

  .document {
    display: flex;
    flex-direction: column;
    flex: 1;
    min-width: 0;
  }

  .formula {
    display: flex;
    align-items: center;
    flex: none;
    height: 40px;
    padding-left: 4px;
  }

  .fx {
    width: 24px;
    margin-right: 1px;
  }

  .line {
    flex: 1;
    height: 24px;
    background: #fff;
    border: 1px solid #cfcfcf;
  }

  .expand {
    width: 22px;
    height: 24px;
    padding-right: 4px;
    color: #cdcdcd;
  }

  .infobar {
    display: flex;
    align-items: center;
    flex: none;
    box-sizing: border-box;
    height: 40px;
    padding: 0 5px 0 3px;
    border: 1px solid #cbcbcb;
    background: #bde5f8;
    color: #111;
  }

  .infobar span {
    flex: 1;
    margin-left: 7px;
  }

  .btn {
    box-sizing: border-box;
    height: 34px;
    padding: 0 16px;
    border: 1px solid #cdcdcd;
    border-radius: 6px;
    background: #fff;
  }

  .infobar .btn {
    background: #fafafa;
    color: #5d5d5d;
  }

  .dismiss {
    margin-left: 7px;
    color: #004b84;
  }

  .sheet {
    display: flex;
    flex: 1;
    min-height: 0;
  }

  .cells {
    flex: 1;
    min-width: 0;
    overflow: hidden;
    background: #fff;
  }

  table {
    width: 1782px;
    table-layout: fixed;
    border-collapse: separate;
    border-spacing: 0;
    font: 15px/17px "DejaVu Sans", sans-serif;
  }

  .c-head {
    width: 41px;
  }

  .c-date {
    width: 124px;
  }

  .c-std {
    width: 77px;
  }

  th {
    height: 17px;
    padding: 0;
    border-right: 1px solid #999;
    border-bottom: 1px solid #999;
    background: #fafafa;
    font: 15px/17px "Open Sans", sans-serif;
  }

  thead th {
    height: 19px;
  }

  th.sel {
    border-color: #cf4a1b;
    background: #e95420;
    color: #fff;
    font-weight: 700;
  }

  td {
    height: 17px;
    padding: 0 2px 0 1px;
    border-right: 1px solid #c0c0c0;
    border-bottom: 1px solid #c0c0c0;
    white-space: nowrap;
  }

  td.sel {
    border-color: #c9a59b;
    background: #f9d3c7;
    color: #2b1b16;
  }

  td.edge {
    border-right-color: #e95420;
  }

  td.last {
    border-bottom-color: #e95420;
  }

  td.num {
    text-align: right;
  }

  td.cursor {
    outline: 2px solid #e95420;
    outline-offset: -1px;
  }

  td span {
    display: block;
    height: 17px;
    overflow: hidden;
    line-height: 19px;
  }

  td.cut {
    position: relative;
  }

  td.cut::before,
  td.cut::after {
    content: "";
    position: absolute;
    right: 0;
    top: 5px;
    border: 4px solid transparent;
    border-left: 4px solid #2a1010;
    border-right: 0;
  }

  td.cut::after {
    right: 1px;
    top: 7px;
    border-width: 2px 0 2px 2px;
    border-left-color: #e01010;
  }

  .vscroll {
    display: flex;
    flex-direction: column;
    align-items: center;
    width: 12px;
  }

  .vscroll b {
    width: 12px;
    height: 5px;
    background: linear-gradient(#111, #111) center / 6px 1px no-repeat #b8b8b8;
  }

  .vscroll i {
    width: 6px;
    height: 47%;
    margin-top: 5px;
    border-radius: 3px;
    background: #888;
  }

  .hscroll {
    display: flex;
    align-items: center;
    justify-content: space-between;
    flex: none;
    height: 12px;
    padding: 0 12px 0 4px;
  }

  .hscroll i {
    width: 60%;
    height: 6px;
    border-radius: 3px;
    background: #868686;
  }

  .hscroll b {
    width: 4px;
    height: 12px;
    background: linear-gradient(#111, #111) center / 1px 6px no-repeat #b8b8b8;
  }

  .tabs {
    display: flex;
    flex: none;
    align-items: center;
    gap: 9px;
    height: 25px;
    padding-left: 10px;
    border-bottom: 1px solid #bdbdbd;
    font-size: 12px;
  }

  .tabs button {
    height: 25px;
    box-sizing: border-box;
    padding-bottom: 1px;
  }

  .tabs .add {
    margin: 0 15px 0 6px;
  }

  .tabs .on {
    width: 65px;
    margin: 0 3px 0 5px;
    padding: 1px 0 0;
    border-bottom: 3px solid #8e8e8e;
    background: #fff;
    font-weight: 700;
  }

  .sidebar {
    position: relative;
    display: flex;
    flex-direction: column;
    align-items: center;
    flex: none;
    width: 59px;
    padding: 15px 0 0 3px;
    box-sizing: border-box;
    border-left: 1px solid #b8b8b8;
    border-bottom: 1px solid #bdbdbd;
  }

  .deck {
    width: 36px;
    height: 34px;
    margin-bottom: 8px;
    border-radius: 6px;
  }

  .deck.on {
    box-sizing: border-box;
    margin-top: 23px;
    border: 1px solid #d0d0d0;
    background: #e6e6e6;
  }

  .hide {
    position: absolute;
    left: 0;
    top: 46%;
    width: 7px;
    height: 73px;
    background: #9a9a9a;
  }

  .status {
    display: flex;
    align-items: center;
    flex: none;
    height: 20px;
  }

  .status span {
    display: flex;
    align-items: center;
    justify-content: center;
    box-sizing: border-box;
    height: 14px;
    border-right: 1px solid #dcdcdc;
  }

  .s-sheet {
    width: 233px;
  }

  .s-style {
    width: 325px;
  }

  .s-lang {
    width: 296px;
  }

  .s-mode {
    width: 273px;
  }

  .s-sel {
    width: 68px;
  }

  .s-small {
    width: 29px;
  }

  .s-small svg {
    margin-left: 4px;
  }

  .s-sum {
    flex: 1;
  }

  .status .s-zoom {
    width: 192px;
    border: 0;
  }

  .dialog {
    position: absolute;
    left: 667px;
    top: 370px;
    width: 655px;
    border-radius: 12px 12px 0 0;
    background: #fafafa;
    box-shadow: 0 0 0 1px rgba(0, 0, 0, 0.25), 0 4px 14px rgba(0, 0, 0, 0.45);
  }

  .head {
    display: grid;
    grid-template-columns: 30px 1fr 30px;
    align-items: center;
    height: 36px;
    border-bottom: 1px solid #c6c6c6;
    border-radius: 12px 12px 0 0;
    background: #ebebeb;
    text-align: center;
  }

  .head h2 {
    grid-column: 2;
    padding-top: 1px;
  }

  .head button {
    width: 22px;
    height: 22px;
    border-radius: 11px;
    background: #d9d9d9;
  }

  .body {
    display: flex;
    flex-direction: column;
    padding: 8px;
  }

  .fields {
    display: grid;
    grid-template-columns: 200px 1fr 187px;
    column-gap: 6px;
  }

  .stack {
    display: flex;
    flex-direction: column;
  }

  .stack h3 {
    margin-bottom: 5px;
  }

  .stack ul {
    flex: 1;
    border: 1px solid #cdcdcd;
    background: #fff;
    color: #000;
  }

  .stack .short {
    flex: none;
    height: 98px;
    margin-bottom: 6px;
  }

  .stack .tall {
    flex: none;
    height: 118px;
  }

  .avail {
    padding-left: 6px;
    border-left: 1px solid #dedede;
  }

  .stack li button {
    justify-content: flex-start;
    width: 100%;
    height: 23px;
    padding-left: 4px;
  }

  .stack li .on {
    background: #e95420;
    color: #fff;
  }

  .hint {
    margin: 6px 0 5px;
    text-align: center;
    text-decoration: underline;
  }

  .expander {
    justify-content: flex-start;
    height: 18px;
    margin-bottom: 5px;
    padding-left: 2px;
    gap: 2px;
    font-weight: 700;
  }

  .expander:first-of-type {
    padding-left: 4px;
    gap: 4px;
  }

  .group {
    margin: 0 0 5px 12px;
  }

  .group.dest {
    margin: 3px 0 7px 12px;
  }

  .choice {
    display: flex;
    height: 34px;
    margin-bottom: 3px;
  }

  .choice.single {
    height: 18px;
    margin-bottom: 5px;
  }

  .choice label {
    display: flex;
    align-items: center;
    flex: none;
    width: 120px;
    padding-left: 28px;
    gap: 4px;
  }

  .choice .off {
    color: #a3a3a3;
  }

  .choice input[type="radio"] {
    appearance: none;
    width: 16px;
    height: 16px;
    border: 1px solid #bcbcbc;
    border-radius: 8px;
    background: #fff;
  }

  .choice .off input[type="radio"] {
    border-color: #d0d0d0;
    background: #fafafa;
  }

  .choice input[type="radio"]:checked {
    border: 5px solid #e95420;
  }

  .pulldown {
    display: grid;
    flex: 1;
    align-items: center;
    color: #a0a0a0;
  }

  .pulldown select {
    grid-area: 1 / 1;
    width: 100%;
    height: 34px;
    border: 1px solid #cdcdcd;
    border-radius: 6px;
    appearance: none;
  }

  .pulldown :global(svg) {
    grid-area: 1 / 1;
    justify-self: end;
    margin-right: 11px;
  }

  .entry {
    flex: 1;
    height: 34px;
    padding-left: 8px;
    border: 1px solid #cdcdcd;
    border-radius: 6px;
    background: #fff;
    color: #000;
  }

  .pick {
    width: 36px;
    margin-left: 6px;
    padding: 0;
  }

  .actions {
    display: flex;
    gap: 4px;
    margin-top: 9px;
  }

  .actions .btn {
    width: 86px;
  }

  .actions .btn:first-child {
    margin-right: auto;
  }

  .pointer {
    position: absolute;
    left: 1171px;
    top: 752px;
  }
</style>
